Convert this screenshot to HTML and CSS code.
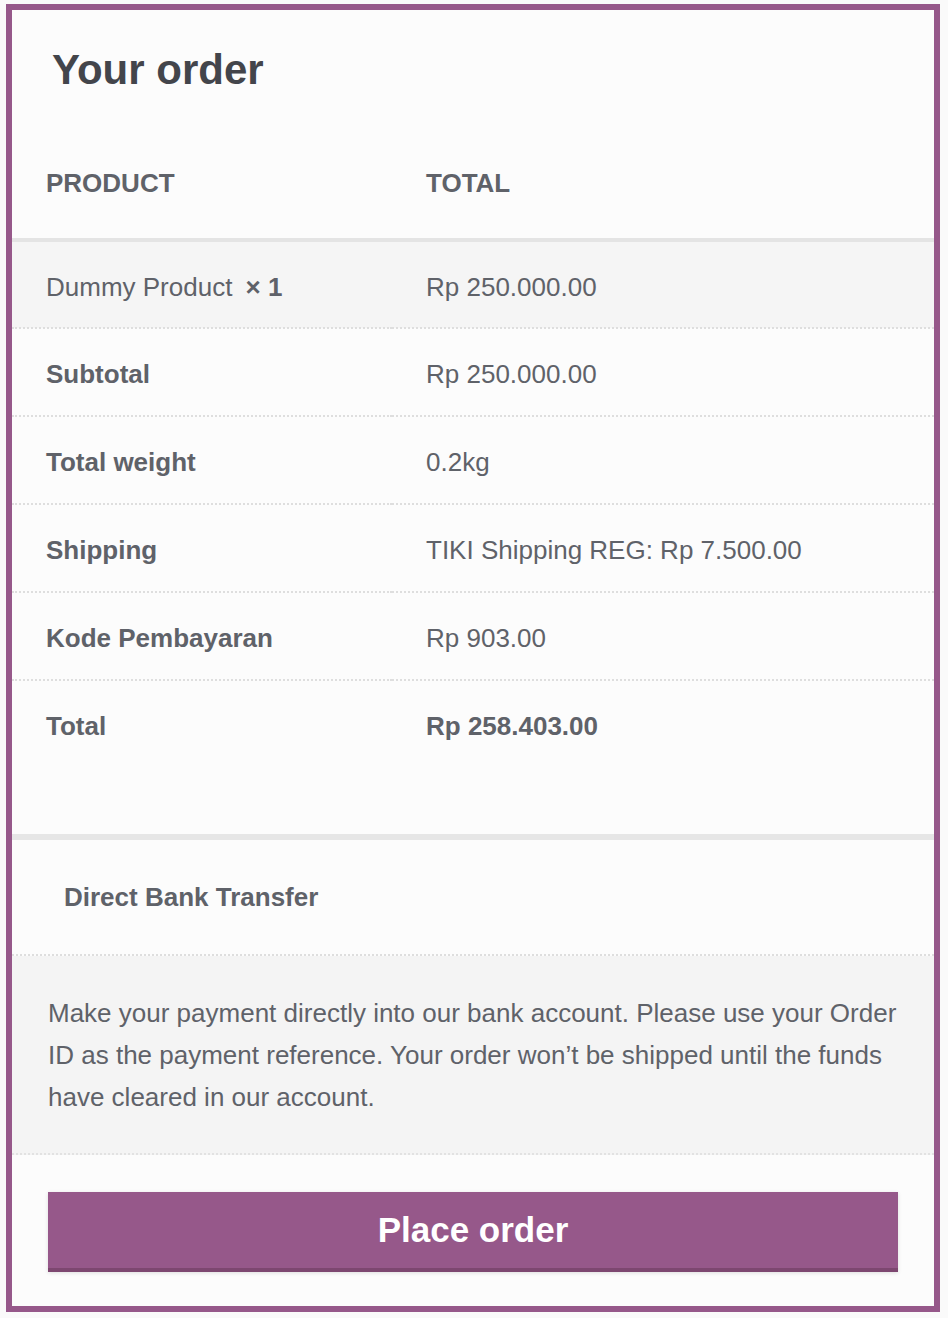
FILE: index.html
```html
<!DOCTYPE html>
<html lang="en">
<head>
<meta charset="utf-8">
<title>Your order</title>
<link rel="stylesheet" href="styles.css">
</head>
<body>
<div class="order-box">
  <h3 class="order-title">Your order</h3>
  <table class="order-table">
    <thead>
      <tr><th class="col-name">Product</th><th class="col-total">Total</th></tr>
    </thead>
    <tbody>
      <tr class="item-row"><td>Dummy Product <strong class="qty">&times; 1</strong></td><td>Rp 250.000.00</td></tr>
    </tbody>
    <tfoot>
      <tr><th>Subtotal</th><td>Rp 250.000.00</td></tr>
      <tr><th>Total weight</th><td>0.2kg</td></tr>
      <tr><th>Shipping</th><td>TIKI Shipping REG: Rp 7.500.00</td></tr>
      <tr><th>Kode Pembayaran</th><td>Rp 903.00</td></tr>
      <tr class="grand-total"><th>Total</th><td><strong>Rp 258.403.00</strong></td></tr>
    </tfoot>
  </table>
  <div class="payment">
    <div class="method-title">Direct Bank Transfer</div>
    <div class="method-desc">Make your payment directly into our bank account. Please use your Order ID as the payment reference. Your order won’t be shipped until the funds have cleared in our account.</div>
    <div class="place-order">
      <button class="place-btn" type="button">Place order</button>
    </div>
  </div>
</div>
</body>
</html>
```

FILE: styles.css
```css
html, body {
  margin: 0;
  padding: 0;
  background: #fafafa;
}
body {
  font-family: "Liberation Sans", Arial, Helvetica, sans-serif;
  color: #5f6269;
  padding: 4px 8px 6px 6px;
}
.order-box {
  border: 6px solid #96588a;
  background: #fcfcfc;
  height: 1296px;
}
.order-title {
  margin: 36px 0 34px 40px;
  font-size: 42px;
  line-height: 48px;
  font-weight: 700;
  color: #43454b;
}
.order-table {
  width: 100%;
  table-layout: fixed;
  border-collapse: collapse;
  margin-bottom: 67px;
  font-size: 26px;
  line-height: 30px;
}
.order-table thead th {
  text-align: left;
  text-transform: uppercase;
  font-weight: 700;
  padding: 40px 0 40px 34px;
  border-bottom: 4px solid #e4e4e4;
}
.order-table .col-name {
  width: 346px;
}
.order-table td,
.order-table tfoot th {
  text-align: left;
  padding: 30px 0 26px 34px;
  border-bottom: 2px dotted #dedede;
  vertical-align: top;
}
.order-table .item-row td {
  padding-bottom: 25px;
  background: #f5f5f5;
}
.order-table tfoot th {
  font-weight: 700;
}
.qty {
  margin-left: 6px;
  font-weight: 700;
}
.grand-total th,
.grand-total td {
  border-bottom: none !important;
}
.payment {
  border-top: 6px solid #e6e6e6;
}
.method-title {
  font-size: 26px;
  line-height: 30px;
  font-weight: 700;
  padding: 42px 0 42px 52px;
  border-bottom: 2px dotted #dedede;
}
.method-desc {
  background: #f4f4f4;
  font-size: 26px;
  line-height: 42px;
  padding: 36px 36px 35px 36px;
  border-bottom: 2px dotted #e2e2e2;
}
.place-order {
  padding: 37px 36px 34px 36px;
}
.place-btn {
  display: block;
  width: 100%;
  height: 80px;
  border: none;
  border-bottom: 4px solid #7d4770;
  background: #96588a;
  color: #ffffff;
  font-family: "Liberation Sans", Arial, Helvetica, sans-serif;
  font-size: 35px;
  font-weight: 700;
  box-shadow: 0 1px 4px rgba(0, 0, 0, 0.12);
  padding: 0;
  cursor: pointer;
}
```
